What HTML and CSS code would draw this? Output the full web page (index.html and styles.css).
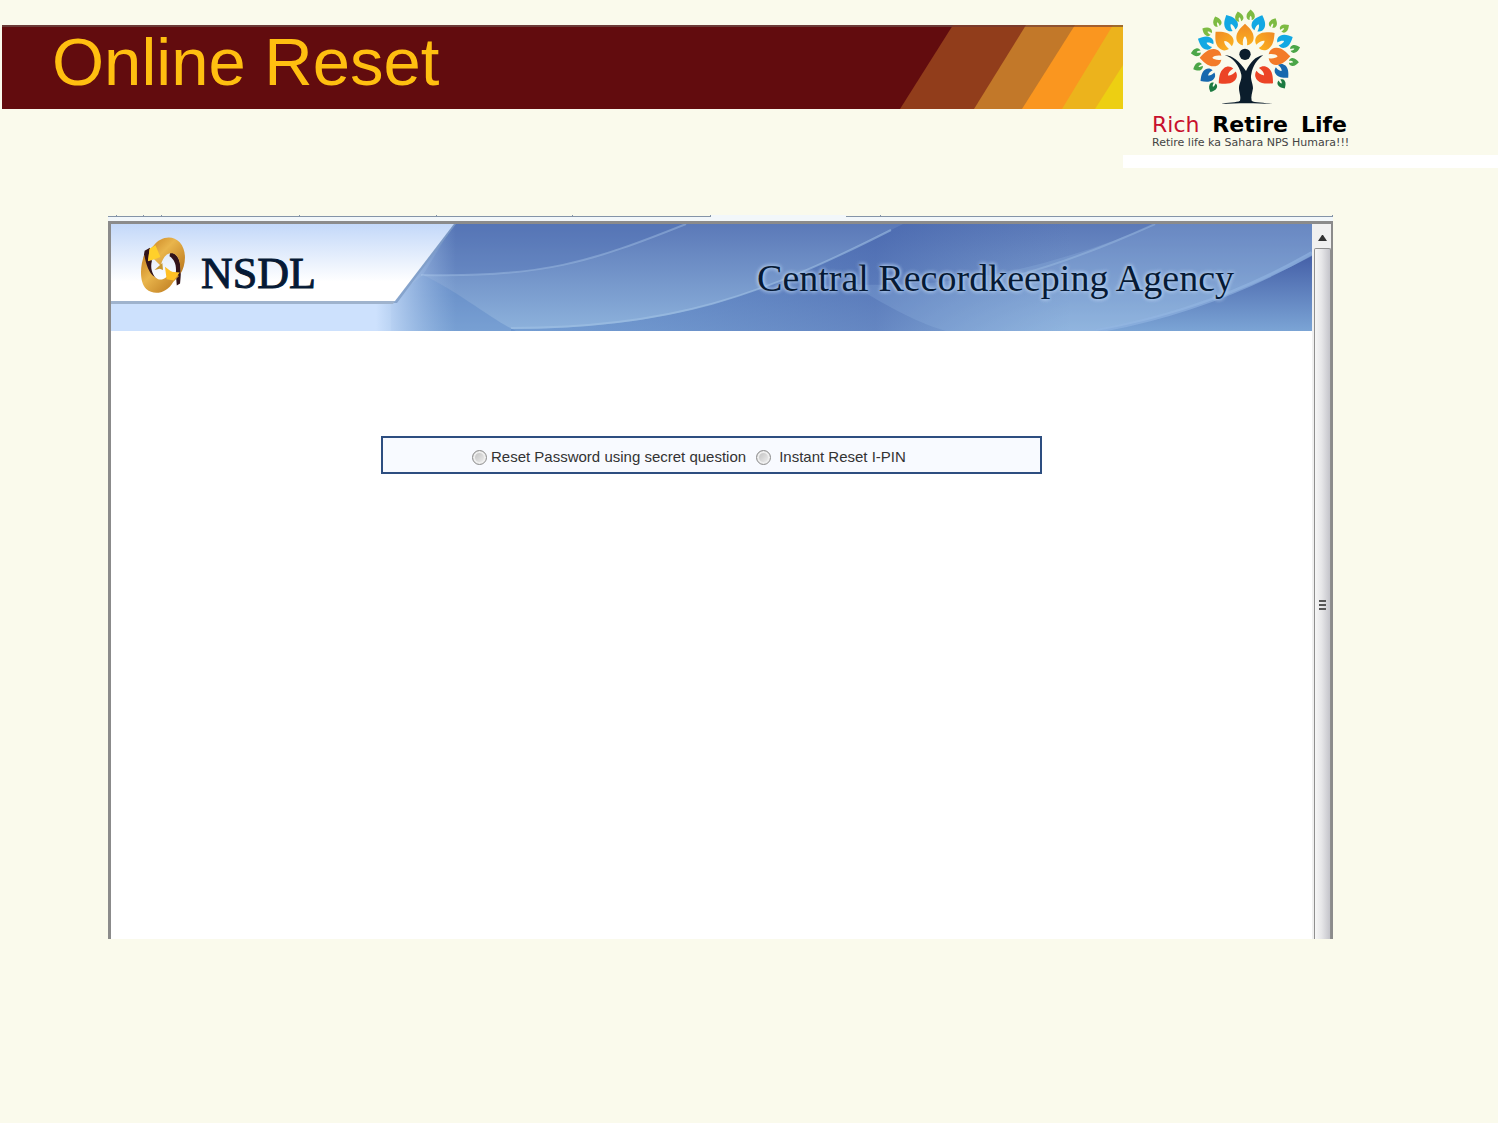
FILE: index.html
```html
<!DOCTYPE html>
<html lang="en">
<head>
  <meta charset="UTF-8">
  <meta name="viewport" content="width=device-width, initial-scale=1.0">
  <title>Online Reset</title>
  <link rel="stylesheet" href="styles.css">
</head>
<body>
  <header class="top">
    <div class="banner">
      <h1>Online Reset</h1>
      <svg class="stripes" viewBox="0 0 223 84" aria-hidden="true">
        <path fill="#913d1b" d="M53 0H223V84H0z"/>
        <path fill="#c27829" d="M126 0H223V84H74z"/>
        <path fill="#fa961f" d="M175 0H223V84H122z"/>
        <path fill="#ecb31c" d="M213 0H223V84H162z"/>
        <path fill="#edcf12" d="M223 40V84H195z"/>
        <path fill="#6b3a38" fill-opacity=".6" d="M0 0H223V2H0z"/>
      </svg>
    </div>
    <div class="brand">
      <svg class="tree" viewBox="0 0 390 315" role="img" aria-label="Rich Retire Life">
        <defs>
          <path id="leaf" d="M0-34C12-23 27-9 26 9C25 22 17 29 6 31C8 18 5 8 0 4C-5 8-8 18-6 31C-17 29-25 22-26 9C-27-9-12-23 0-34z"/>
          <linearGradient id="sun" x1="0" y1="0" x2="0" y2="1">
            <stop offset="0" stop-color="#f08a24"/>
            <stop offset="1" stop-color="#fbb01f"/>
          </linearGradient>
        </defs>
        <g fill="url(#sun)">
          <use href="#leaf" transform="translate(195 90)"/>
          <use href="#leaf" transform="translate(130 105) rotate(-43)"/>
          <use href="#leaf" transform="translate(257 105) rotate(52)"/>
        </g>
        <g fill="#f37b28">
          <use href="#leaf" transform="translate(93 158) rotate(-90)"/>
          <use href="#leaf" transform="translate(297 154) rotate(90)"/>
        </g>
        <g fill="#ec4426">
          <use href="#leaf" transform="translate(141 214) rotate(-130) scale(.95)"/>
          <use href="#leaf" transform="translate(255 213) rotate(132) scale(.95)"/>
        </g>
        <g fill="#12a8e3">
          <use href="#leaf" transform="translate(151 54) rotate(-27) scale(.78)"/>
          <use href="#leaf" transform="translate(237 55) rotate(22) scale(.78)"/>
          <use href="#leaf" transform="translate(77 112) rotate(-65) scale(.75)"/>
          <use href="#leaf" transform="translate(315 107) rotate(65) scale(.75)"/>
        </g>
        <g fill="#1668ae">
          <use href="#leaf" transform="translate(82 213) rotate(-127) scale(.75)"/>
          <use href="#leaf" transform="translate(307 200) rotate(136) scale(.75)"/>
        </g>
        <g fill="#7dbb42">
          <use href="#leaf" transform="translate(111 50) rotate(-20) scale(.48)"/>
          <use href="#leaf" transform="translate(177 35) rotate(-14) scale(.48)"/>
          <use href="#leaf" transform="translate(212 30) scale(.48)"/>
          <use href="#leaf" transform="translate(280 54) rotate(25) scale(.46)"/>
          <use href="#leaf" transform="translate(314 69) rotate(55) scale(.46)"/>
          <use href="#leaf" transform="translate(81 79) rotate(-58) scale(.48)"/>
        </g>
        <g fill="#4ba648">
          <use href="#leaf" transform="translate(48 142) rotate(-100) scale(.46)"/>
          <use href="#leaf" transform="translate(54 186) rotate(-115) scale(.46)"/>
          <use href="#leaf" transform="translate(345 131) rotate(75) scale(.46)"/>
          <use href="#leaf" transform="translate(341 171) rotate(92) scale(.46)"/>
        </g>
        <g fill="#1c7a41">
          <use href="#leaf" transform="translate(98 247) rotate(-155) scale(.46)"/>
          <use href="#leaf" transform="translate(306 237) rotate(148) scale(.46)"/>
        </g>
        <g fill="#0b1d2c">
          <circle cx="195" cy="148" r="17"/>
          <path d="M134 150C158 151 178 169 198 198C211 172 226 154 250 151C232 162 218 184 214 207C210 222 219 235 219 250C217 263 212 275 215 287C222 293 255 292 276 297C230 294 170 294 123 297C140 291 173 293 180 287C184 275 176 261 177 247C178 234 186 224 184 209C178 181 158 157 134 150z"/>
        </g>
      </svg>
      <p class="brand-name"><span>Rich</span> <b>Retire</b> <b>Life</b></p>
      <p class="tagline">Retire life ka Sahara NPS Humara!!!</p>
    </div>
  </header>

  <main class="window">
    <div class="tabs">
      <span></span>
      <span></span>
      <span></span>
      <span></span>
      <span></span>
      <span></span>
      <span></span>
      <span class="active"></span>
      <span></span>
      <span></span>
    </div>
    <div class="frame">
      <div class="page">
        <div class="site-header">
          <svg class="waves" viewBox="0 0 1201 107" preserveAspectRatio="none" aria-hidden="true">
            <defs>
              <linearGradient id="sky" x1="0" y1="0" x2="0" y2="1">
                <stop offset="0" stop-color="#5b79b8"/>
                <stop offset="1" stop-color="#8db2dc"/>
              </linearGradient>
              <linearGradient id="deep" x1="0" y1="0" x2="0" y2="1">
                <stop offset="0" stop-color="#4560a8"/>
                <stop offset="1" stop-color="#7ba4d5"/>
              </linearGradient>
              <linearGradient id="dusk" gradientUnits="userSpaceOnUse" x1="400" y1="0" x2="960" y2="0">
                <stop offset="0" stop-color="#4f7fc4" stop-opacity=".4"/>
                <stop offset=".65" stop-color="#3c5ba8" stop-opacity=".5"/>
                <stop offset="1" stop-color="#4a6bb0" stop-opacity="0"/>
              </linearGradient>
              <linearGradient id="panel" x1="0" y1="0" x2="0" y2="1">
                <stop offset="0" stop-color="#c3d8f9"/>
                <stop offset=".75" stop-color="#fff"/>
              </linearGradient>
              <linearGradient id="fade" gradientUnits="userSpaceOnUse" x1="265" y1="0" x2="345" y2="0">
                <stop offset="0" stop-color="#cde1fd"/>
                <stop offset="1" stop-color="#a9c8ec" stop-opacity="0"/>
              </linearGradient>
            </defs>
            <path fill="url(#sky)" d="M0 0H1201V107H0z"/>
            <path fill="#4a6bb0" fill-opacity=".3" d="M312 51C430 54 480 38 575 0H343z"/>
            <path fill="none" stroke="#9dbce2" stroke-opacity=".5" stroke-width="2" d="M310 51C430 54 480 38 575 0"/>
            <path fill="#4f7fc4" fill-opacity=".35" d="M312 51C345 66 380 95 405 107H280V76z"/>
            <path fill="url(#dusk)" d="M400 105C560 105 650 72 780 6L792 0H960V107H400z"/>
            <path fill="none" stroke="#a2c2e6" stroke-opacity=".55" stroke-width="2" d="M400 104C560 104 650 72 780 6"/>
            <path fill="#9fc4ea" fill-opacity=".2" d="M740 60C850 66 950 40 1044 0H1201V29C1140 64 1080 90 985 107H835C810 100 780 85 740 60z"/>
            <path fill="none" stroke="#a2c2e6" stroke-opacity=".4" stroke-width="2" d="M900 53C950 40 1000 20 1044 0"/>
            <path fill="url(#deep)" d="M985 107C1070 92 1140 64 1201 32V107z"/>
            <path fill="none" stroke="#93b6e2" stroke-opacity=".6" stroke-width="4" d="M985 107C1070 92 1140 64 1201 29"/>
            <path fill="url(#fade)" d="M0 76H284L343 0H350V107H0z"/>
            <path fill="#7e9cc6" fill-opacity=".8" d="M0 76H284L343 0H345L286 79H0z"/>
            <path fill="url(#panel)" d="M0 0H343L284 77H0z"/>
            <path fill="#9fb3cd" d="M0 77H284L282 80H0z"/>
          </svg>
          <div class="nsdl">
            <svg class="ring" viewBox="0 0 140 180" role="img" aria-label="NSDL logo">
              <defs>
                <linearGradient id="gold" x1="0" y1="0" x2="1" y2="1">
                  <stop offset="0" stop-color="#c8811f"/>
                  <stop offset=".4" stop-color="#e9b54c"/>
                  <stop offset="1" stop-color="#b8741a"/>
                </linearGradient>
              </defs>
              <path fill="#32131a" d="M14 45L30 36L36 77C30 98 38 124 58 136L30 142C11 121 7 79 14 45z"/>
              <path fill="#32131a" d="M92 48C121 57 129 83 122 145L112 151L109 114C112 89 105 72 90 62z"/>
              <path fill="url(#gold)" d="M41 30C61 2 99-5 121 19C145 46 139 92 123 116C125 78 116 57 99 53C82 50 70 64 63 91L42 70L24 76L29 41z"/>
              <path fill="url(#gold)" d="M13 57C0 91-3 139 19 162C44 184 83 173 101 140L119 122L95 108C82 131 60 141 44 124C27 114 18 86 13 57z"/>
              <path fill="#ffd02b" d="M29 39L47 28L62 64L46 70L24 77z"/>
              <path fill="#ffbf24" d="M76 94L96 109L121 111L103 136L81 132z"/>
              <path fill="#c6962f" d="M44 104L68 82L70 104L60 100z"/>
            </svg>
            <span class="nsdl-name">NSDL</span>
          </div>
          <h2>Central Recordkeeping Agency</h2>
        </div>
        <form class="options">
          <label><input type="radio" name="reset" value="password">Reset Password using secret question</label>
          <label class="wide"><input type="radio" name="reset" value="ipin">Instant Reset I-PIN</label>
        </form>
      </div>
      <div class="scrollbar">
        <button type="button" class="up" aria-label="Scroll up">
          <svg viewBox="0 0 9 6"><path fill="#333" d="M4 0H5L9 6H0z"/></svg>
        </button>
        <div class="thumb"><i></i><i></i><i></i></div>
      </div>
    </div>
  </main>
</body>
</html>
```

FILE: styles.css
```css
* {
  box-sizing: border-box;
}

body {
  margin: 0;
  min-height: 100vh;
  background-color: #fafaec;
  font-family: "Liberation Sans", Arial, sans-serif;
}

h1,
h2,
p {
  margin: 0;
  font-weight: normal;
}

.top {
  display: flex;
  align-items: flex-start;
  padding-left: 2px;
}

.banner {
  flex: 1;
  display: flex;
  justify-content: space-between;
  height: 84px;
  margin-top: 25px;
  background-color: #620c0e;
  border-top: 2px solid #6b3a38;
}

.banner h1 {
  padding-left: 50px;
  color: #ffbf10;
  font-size: 67px;
  line-height: 70px;
  white-space: nowrap;
}

.stripes {
  width: 223px;
  height: 84px;
  margin-top: -2px;
}

/* brand */
.brand {
  width: 375px;
  height: 168px;
  padding: 5px 151px 0 29px;
  border-bottom: 13px solid #fff;
  font-family: "DejaVu Sans", sans-serif;
  white-space: nowrap;
}

.tree {
  display: block;
  width: 130px;
  height: 105px;
  margin-left: 28px;
}

.brand-name {
  display: flex;
  justify-content: space-between;
  color: #000;
  font-size: 22px;
  line-height: 30px;
}

.brand-name span {
  color: #c8102e;
}

.tagline {
  color: #444;
  font-size: 11px;
  line-height: 6px;
}

/* browser window */
.window {
  margin: 47px 165px 0 108px;
}

.tabs {
  display: grid;
  grid-template-columns: 9px 27px 18px 138px 137px 136px 138px 135px 35px 1fr;
  align-items: start;
  height: 6px;
  background-color: #f2f7fa;
}

.tabs span {
  height: 2px;
  background-color: #fafaec;
  border-right: 1px solid #8494a8;
  border-bottom: 1px solid #8494a8;
}

.tabs .active {
  background: none;
  border: none;
}

.frame {
  display: flex;
  min-height: 718px;
  border: solid #8b8b8b;
  border-width: 3px 2px 0 3px;
  background-color: #fff;
}

.page {
  flex: 1;
}

.site-header {
  position: relative;
  display: flex;
  justify-content: space-between;
  height: 107px;
  padding: 12px 78px 0 29px;
  color: #061a35;
  font-family: "Liberation Serif", "Times New Roman", serif;
}

.waves {
  position: absolute;
  top: 0;
  left: 0;
  width: 100%;
  height: 100%;
}

.nsdl {
  position: relative;
  display: flex;
  gap: 15px;
}

.ring {
  width: 46px;
  height: 59px;
}

.nsdl-name {
  font-size: 44px;
  line-height: 76px;
  -webkit-text-stroke: 1px #061a35;
}

.site-header h2 {
  position: relative;
  font-size: 38px;
  line-height: 84px;
  white-space: nowrap;
  text-shadow: 0 0 4px #bdd5f2, 0 0 4px #bdd5f2;
}

.options {
  display: flex;
  align-items: center;
  gap: 10px;
  width: 661px;
  height: 38px;
  margin: 105px auto 0;
  padding: 4px 0 0 89px;
  background-color: #f8faff;
  border: 2px solid #2d4e80;
}

.options label {
  display: flex;
  align-items: center;
  gap: 4px;
  color: #333;
  font-size: 15px;
  line-height: 20px;
  white-space: nowrap;
}

.options .wide {
  gap: 8px;
}

.options input {
  appearance: none;
  width: 15px;
  height: 15px;
  margin: 0;
  border: 1px solid #8c8c8c;
  border-radius: 50%;
  background: linear-gradient(135deg, #bbb, #f4f4f4);
  box-shadow: inset 0 0 0 2px #eee;
}

.options input:checked {
  background: #2d4e80;
}

/* scrollbar */
.scrollbar {
  display: flex;
  flex-direction: column;
  width: 19px;
  padding-left: 2px;
  background-color: #f0f0f0;
}

.up {
  height: 24px;
  padding: 0;
  border: none;
  background: none;
}

.up svg {
  width: 9px;
  height: 6px;
}

.thumb {
  flex: 1;
  display: flex;
  flex-direction: column;
  align-items: center;
  gap: 2px;
  padding-top: 351px;
  background: linear-gradient(90deg, #f6f6f6, #e6e6e8 45%, #c4c4ca);
  border: 1px solid #8f8f8f;
  border-bottom: none;
  border-radius: 2px 2px 0 0;
}

.thumb i {
  width: 7px;
  height: 2px;
  background-color: #555;
}
```
